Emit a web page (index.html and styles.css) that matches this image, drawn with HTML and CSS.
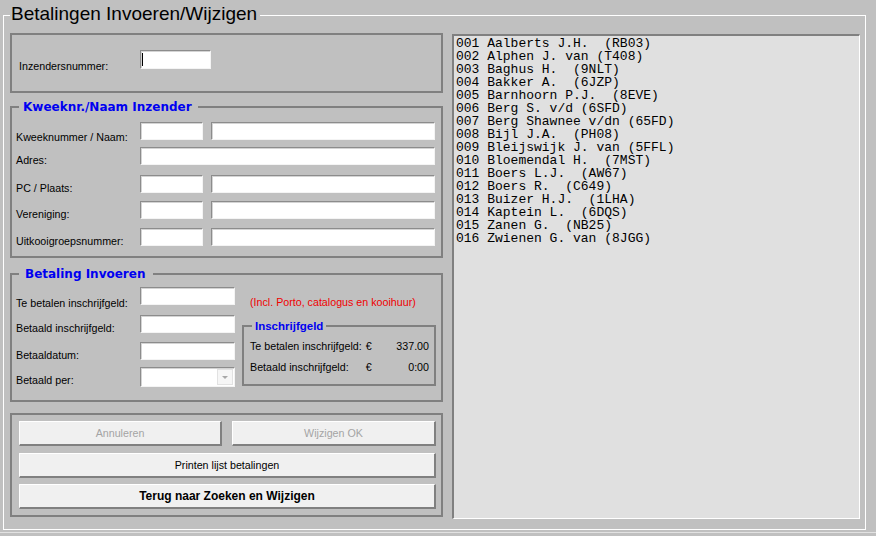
FILE: index.html
```html
<!DOCTYPE html>
<html lang="nl">
<head>
<meta charset="utf-8">
<title>Betalingen Invoeren/Wijzigen</title>
<link rel="stylesheet" href="styles.css">
</head>
<body>
<fieldset class="frame">
  <legend class="frame-title">Betalingen Invoeren/Wijzigen</legend>
  <div class="frame-body">
    <div class="left">
      <div class="box box-id">
        <span class="lbl lbl-id">Inzendersnummer:</span>
        <div class="field field-id"><span class="caret"></span></div>
      </div>

      <fieldset class="group group-naam">
        <legend class="group-title">Kweeknr./Naam Inzender</legend>
        <div class="naam-grid">
          <span class="lbl first">Kweeknummer / Naam:</span>
          <input class="field" type="text">
          <input class="field col-long" type="text">

          <span class="lbl">Adres:</span>
          <input class="field span-all" type="text">

          <span class="lbl">PC / Plaats:</span>
          <input class="field" type="text">
          <input class="field col-long" type="text">

          <span class="lbl">Vereniging:</span>
          <input class="field" type="text">
          <input class="field col-long" type="text">

          <span class="lbl">Uitkooigroepsnummer:</span>
          <input class="field" type="text">
          <input class="field col-long" type="text">
        </div>
      </fieldset>

      <fieldset class="group group-pay">
        <legend class="group-title pay-title">Betaling Invoeren</legend>
        <div class="pay">
          <div class="pay-grid">
            <span class="lbl first-pay">Te betalen inschrijfgeld:</span>
            <input class="field" type="text">
            <span class="lbl">Betaald inschrijfgeld:</span>
            <input class="field" type="text">
            <span class="lbl">Betaaldatum:</span>
            <input class="field" type="text">
            <span class="lbl">Betaald per:</span>
            <div class="field combo"><span class="combo-btn"><span class="combo-arrow"></span></span></div>
          </div>
          <div class="pay-side">
            <div class="note">(Incl. Porto, catalogus en kooihuur)</div>
            <fieldset class="fee">
              <legend class="fee-title">Inschrijfgeld</legend>
              <div class="fee-grid">
                <span>Te betalen inschrijfgeld:</span><span class="euro">€</span><span class="amt">337.00</span>
                <span>Betaald inschrijfgeld:</span><span class="euro">€</span><span class="amt">0:00</span>
              </div>
            </fieldset>
          </div>
        </div>
      </fieldset>

      <div class="box box-btns">
        <button class="btn" type="button" disabled>Annuleren</button>
        <button class="btn" type="button" disabled>Wijzigen OK</button>
        <button class="btn wide" type="button">Printen lijst betalingen</button>
        <button class="btn wide bold" type="button">Terug naar Zoeken en Wijzigen</button>
      </div>
    </div>

    <ul class="list">
      <li>001 Aalberts J.H.  (RB03)</li>
      <li>002 Alphen J. van (T408)</li>
      <li>003 Baghus H.  (9NLT)</li>
      <li>004 Bakker A.  (6JZP)</li>
      <li>005 Barnhoorn P.J.  (8EVE)</li>
      <li>006 Berg S. v/d (6SFD)</li>
      <li>007 Berg Shawnee v/dn (65FD)</li>
      <li>008 Bijl J.A.  (PH08)</li>
      <li>009 Bleijswijk J. van (5FFL)</li>
      <li>010 Bloemendal H.  (7MST)</li>
      <li>011 Boers L.J.  (AW67)</li>
      <li>012 Boers R.  (C649)</li>
      <li>013 Buizer H.J.  (1LHA)</li>
      <li>014 Kaptein L.  (6DQS)</li>
      <li>015 Zanen G.  (NB25)</li>
      <li>016 Zwienen G. van (8JGG)</li>
    </ul>
  </div>
</fieldset>
<div class="window-edge"></div>
</body>
</html>
```

FILE: styles.css
```css
* { box-sizing: border-box; }

html, body {
  margin: 0;
  padding: 0;
}

body {
  width: 876px;
  height: 536px;
  overflow: hidden;
  background: #c0c0c0;
  font-family: "Liberation Sans", Arial, sans-serif;
  font-size: 10.7px;
  color: #000;
}

/* outer frame */
.frame {
  margin: 3px 0 0 3px;
  width: 863px;
  height: 527px;
  padding: 5px 5px 0 6px;
  border: 1px solid #ffffff;
  min-width: 0;
}

.frame-title {
  font-size: 19px;
  line-height: 21px;
  padding: 0 3px 4px 1px;
  margin: 0;
}

.frame-body {
  display: flex;
  gap: 9px;
  align-items: flex-start;
}

.window-edge {
  margin-top: 2px;
  height: 1px;
  background: #e2e2e2;
}

.left {
  width: 433px;
  flex: 0 0 433px;
  display: flex;
  flex-direction: column;
}

/* boxes & groups */
.box {
  border: 2px solid #808080;
}

.group {
  margin: 0;
  padding: 0;
  border: 2px solid #808080;
  min-width: 0;
}

.group-title {
  font-family: "DejaVu Sans", Verdana, sans-serif;
  font-weight: bold;
  font-size: 12px;
  line-height: 14px;
  color: #0000f0;
  margin-left: 7px;
  padding: 0 6px 0 4px;
}

.pay-title {
  padding: 0 8px 0 6px;
}

/* labels & fields */
.lbl {
  display: block;
  line-height: 12px;
  margin-top: 7px;
  white-space: nowrap;
}

.lbl.first { margin-top: 9px; }
.lbl.first-pay { margin-top: 10px; }

.field {
  display: block;
  width: 100%;
  height: 18px;
  margin: 0;
  padding: 0;
  background: #ffffff;
  border-style: solid;
  border-width: 1px;
  border-color: #8c8c8c #f4f4f4 #f4f4f4 #8c8c8c;
  box-shadow: inset 1px 1px 0 #d4d4d4;
  font: inherit;
  outline: none;
}

/* group 1 */
.box-id {
  height: 60px;
  display: flex;
  align-items: flex-start;
  padding: 15px 0 0 7px;
}

.lbl-id {
  width: 121px;
  margin-top: 10px;
}

.field-id {
  width: 71px;
  height: 19px;
  padding: 2px 0 0 1px;
}

.caret {
  display: block;
  width: 1px;
  height: 13px;
  background: #000;
}

/* group 2 */
.group-naam {
  margin-top: 7px;
  height: 158px;
}

.naam-grid {
  display: grid;
  grid-template-columns: 124px 63px 8px 224px;
  grid-template-rows: 25px 28px 26px 27px 18px;
  align-items: start;
  padding: 8px 6px 0 4px;
}

.naam-grid .col-long { grid-column: 4; }
.naam-grid .span-all { grid-column: 2 / 5; }

/* group 3 */
.group-pay {
  margin-top: 9px;
  height: 135px;
}

.pay {
  display: flex;
  padding: 6px 5px 0 4px;
}

.pay-grid {
  display: grid;
  grid-template-columns: 124px 95px;
  grid-template-rows: 28px 27px 25px 20px;
  align-items: start;
}

.combo {
  height: 20px;
  display: flex;
  justify-content: flex-end;
  align-items: center;
  padding-right: 1px;
}

.combo-btn {
  width: 16px;
  height: 16px;
  background: #f6f6f6;
  border: 1px solid #e2e2e2;
  display: flex;
  align-items: center;
  justify-content: center;
}

.combo-arrow {
  width: 0;
  height: 0;
  border-left: 3px solid transparent;
  border-right: 3px solid transparent;
  border-top: 3px solid #a8a8a8;
}

.pay-side {
  flex: 1;
  margin-left: 7px;
}

.note {
  color: #f00000;
  line-height: 12px;
  margin-top: 9px;
  padding-left: 8px;
  white-space: nowrap;
}

.fee {
  margin: 11px 0 0;
  padding: 0;
  height: 67px;
  border: 2px solid #808080;
  min-width: 0;
}

.fee-title {
  font-weight: bold;
  font-size: 11.5px;
  line-height: 14px;
  color: #0000f0;
  margin-left: 8px;
  padding: 0 3px;
}

.fee-grid {
  display: grid;
  grid-template-columns: auto auto 1fr;
  grid-auto-rows: 21px;
  line-height: 12px;
  padding: 7px 5px 0 6px;
  white-space: nowrap;
}

.euro { margin-left: 4px; }
.amt { text-align: right; }

/* group 4: buttons */
.box-btns {
  margin-top: 11px;
  height: 104px;
  padding: 6px 5px 0 7px;
  display: grid;
  grid-template-columns: 203px 204px;
  grid-auto-rows: 25px;
  row-gap: 6.5px;
  column-gap: 10px;
}

.btn {
  margin: 0;
  padding: 0;
  font: inherit;
  color: #000;
  background: #f0f0f0;
  border-style: solid;
  border-width: 1px 2px 2px 1px;
  border-color: #ffffff #808080 #808080 #ffffff;
}

.btn:disabled { color: #a4a4a4; }
.btn.wide { grid-column: 1 / 3; }
.btn.bold { font-weight: bold; font-size: 12px; }

/* list */
.list {
  flex: 0 0 408px;
  width: 408px;
  height: 485px;
  margin: 1px 0 0;
  padding: 1px 2px;
  list-style: none;
  background: #e0e0e0;
  border-style: solid;
  border-width: 2px 1px 1px 2px;
  border-color: #808080 #ffffff #ffffff #808080;
  font-family: "Liberation Mono", "Courier New", monospace;
  font-size: 13px;
  line-height: 13px;
}

.list li { white-space: pre; }
```
